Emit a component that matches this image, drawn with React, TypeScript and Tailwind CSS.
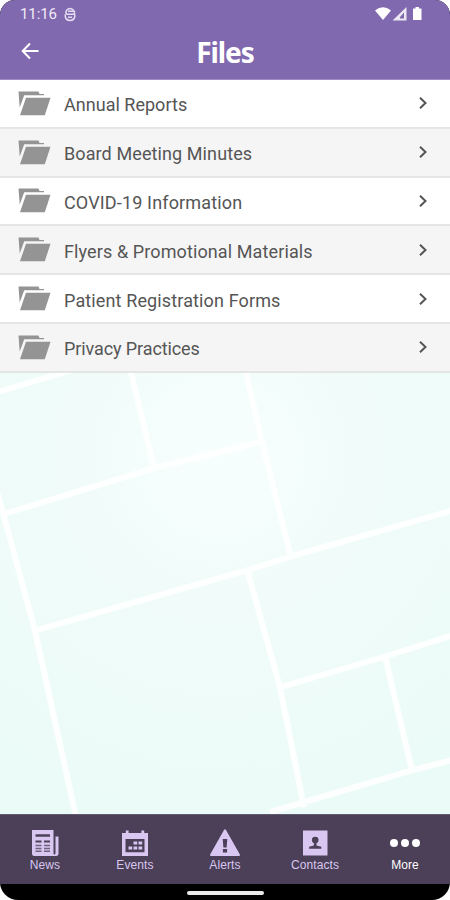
import type { ReactNode } from 'react';

type FolderRow = {
  name: string;
  /** Letter spacing differs slightly per label. */
  tracking: string;
};

const folders: FolderRow[] = [
  { name: 'Annual Reports', tracking: 'tracking-[0.02px]' },
  { name: 'Board Meeting Minutes', tracking: 'tracking-[0.1px]' },
  { name: 'COVID-19 Information', tracking: 'tracking-[0.15px]' },
  { name: 'Flyers & Promotional Materials', tracking: 'tracking-[0.11px]' },
  { name: 'Patient Registration Forms', tracking: 'tracking-[0.13px]' },
  { name: 'Privacy Practices', tracking: 'tracking-[-0.1px]' },
];

function StatusBar() {
  return (
    <div className="flex h-7 items-center justify-between pr-[27px] pl-5 text-white">
      <div className="flex items-center gap-[7px]">
        <span className="text-[15px] leading-none tracking-[-0.1px] text-[#f1eaf9]">11:16</span>
        <svg className="h-[15px] w-[12px]" viewBox="0 0 12 15" fill="none" stroke="#e6dcf3" strokeWidth="1.5">
          <path d="M9.6 3.2Q6-.4 2.6 3.2 1 6 3 7.2H10.8M1.3 7.2V9.5Q2 13.4 6 13.4T10.8 9.5V7.2M4 4.3h6.4V7M4 10.2h4.2" />
        </svg>
      </div>
      <svg className="h-[16px] w-[48px]" viewBox="0 0 48 16" fill="white">
        <path d="M0 4.5Q8-2 16 4.5L8 14Z" />
        <path d="M31.5 1v13.5H17.5Z M29 6.5 25 11v1.5h4Z" fillRule="evenodd" fillOpacity="0.85" />
        <path d="M40.5 1h3.5v1.5h2.5V14h-8.5V2.5h2.5Z" />
      </svg>
    </div>
  );
}

function FolderIcon() {
  return (
    <svg className="h-[25px] w-[34px]" viewBox="0 0 34 25" fill="#949494">
      <path d="M.5.5H20.5L21.5 3h4.5V4.3H6.2L1.7 16.5Z" />
      <path d="M8 6.8H32.5L26.8 24.3H2Z" />
    </svg>
  );
}

function MapBackground() {
  return (
    <svg className="block h-full w-full" viewBox="0 0 450 442" preserveAspectRatio="none">
      <defs>
        <radialGradient id="glow" gradientUnits="userSpaceOnUse" cx="220" cy="85" r="380">
          <stop offset="0" stopColor="#f7fffe" />
          <stop offset="0.35" stopColor="#f1fcfa" />
          <stop offset="1" stopColor="#ebfbf8" />
        </radialGradient>
      </defs>
      <rect width="450" height="442" fill="url(#glow)" />
      <g stroke="#fff" strokeWidth="6" strokeOpacity="0.9" fill="none">
        <path d="M-5 20 75-4M130-5 154 95M245-5 262 69 290 181M5 141 155 95 260 69" />
        <path d="M-3 118 35 258 76 445M35 258 249 197 290 184 455 137" />
        <path d="M248 200 280 315 304 435M280 315 385 284 455 262M385 284 412 398M270 440 412 398 455 387" />
      </g>
    </svg>
  );
}

const navItems: { label: string; icon: ReactNode }[] = [
  {
    label: 'News',
    icon: (
      <svg className="h-[28px] w-[30px]" viewBox="0 0 30 28">
        <path fill="currentColor" d="M2 1h21.5v23q0 1.5 1 1.5t1-1.5V7.5h3V25q0 2-2.5 2H4.5Q2 27 2 24.5Z" />
        <path stroke="#4b4057" strokeWidth="2.6" d="M5.5 6.5h14.5" />
        <path stroke="#4b4057" strokeWidth="2" d="M5.5 12.5h6M14 12.5h6" />
        <path stroke="#4b4057" strokeWidth="1.6" strokeOpacity="0.75" d="M5.5 16.5h6M14 16.5h6M5.5 19.5h6M14 19.5h6M5.5 22.3h6M14 22.3h6" />
      </svg>
    ),
  },
  {
    label: 'Events',
    icon: (
      <svg className="h-[28px] w-[30px]" viewBox="0 0 30 28">
        <path fill="currentColor" fillRule="evenodd" d="M2 4h3.8V1.5h2.8V4h12.8V1.5h2.8V4H28V27H2ZM5.5 10v13.3h19V10Z" />
        <path fill="currentColor" d="M13.5 12.5h3.7v3h-3.7ZM18.5 12.5h3.7v3h-3.7ZM8.5 17.5h3.7v3H8.5ZM13.5 17.5h3.7v3h-3.7ZM18.5 17.5h3.7v3h-3.7Z" />
      </svg>
    ),
  },
  {
    label: 'Alerts',
    icon: (
      <svg className="h-[28px] w-[32px]" viewBox="0 0 32 28">
        <path fill="currentColor" stroke="currentColor" strokeWidth="2" strokeLinejoin="round" d="M16 1.3 30 26H2Z" />
        <path fill="#4b4057" d="M13.7 10h4.6l-.7 8.5h-3.2ZM13.9 20h4.2v3.6h-4.2Z" />
      </svg>
    ),
  },
  {
    label: 'Contacts',
    icon: (
      <svg className="h-[28px] w-[30px]" viewBox="0 0 30 28">
        <path fill="currentColor" d="M3 1.5h24.5V26.5H3Z" />
        <circle cx="15.2" cy="11" r="3.3" fill="#4b4057" />
        <path fill="#4b4057" d="M13.9 13h2.6v3.5l4.8 1.2v2H9.1v-2l4.8-1.2Z" />
      </svg>
    ),
  },
  {
    label: 'More',
    icon: (
      <svg className="h-[28px] w-[30px]" viewBox="0 0 30 28" fill="currentColor">
        <circle cx="4" cy="14" r="4" />
        <circle cx="15" cy="14" r="4" />
        <circle cx="26" cy="14" r="4" />
      </svg>
    ),
  },
];

export default function App() {
  return (
    <div className="h-[900px] w-[450px] bg-white font-[Roboto,sans-serif]">
      <div className="flex h-full flex-col overflow-hidden rounded-t-[15px] rounded-b-[18px] bg-black">
        <header className="h-[80px] shrink-0 border-b border-[#9f8dc4] bg-[#8069ae]">
          <StatusBar />
          <div className="grid h-[46px] grid-cols-[60px_1fr_60px] items-center">
            <button type="button" aria-label="Back" className="pl-[21px] text-white">
              <svg className="h-[18px] w-[18px]" viewBox="0 0 18 18" fill="none" stroke="currentColor" strokeWidth="2">
                <path d="M9 1.5 1.7 9 9 16.5M1.7 9H17.5" />
              </svg>
            </button>
            <h1 className="pt-[2px] text-center font-['Noto_Sans'] text-[28px] leading-none font-bold tracking-[-1.1px] text-white">
              Files
            </h1>
          </div>
        </header>

        <ul className="shrink-0">
          {folders.map((folder) => (
            <li
              key={folder.name}
              className="flex h-[48.8px] items-center border-b-2 border-[#e4e6e6] bg-white pr-[22px] pl-[18px] even:bg-[#f5f5f5]"
            >
              <FolderIcon />
              <span className={`ml-3 flex-1 pt-[4px] text-[18px] leading-none whitespace-nowrap text-[#555] ${folder.tracking}`}>
                {folder.name}
              </span>
              <svg className="h-3 w-[10px]" viewBox="0 0 10 12" fill="none" stroke="#555" strokeWidth="2">
                <path d="m2 .8 5.5 5.2L2 11.2" />
              </svg>
            </li>
          ))}
        </ul>

        <main className="min-h-0 flex-1 overflow-hidden">
          <MapBackground />
        </main>

        <nav className="grid h-[70px] shrink-0 grid-cols-5 border-t border-[#625a6d] bg-[#4b4057]">
          {navItems.map(({ label, icon }) => (
            <button
              key={label}
              type="button"
              className="flex flex-col items-center pt-[14px] text-[#d9c6f1] last:text-white"
            >
              {icon}
              <span className="mt-px font-['Liberation_Sans'] text-[12px] leading-[14px] tracking-[0.1px]">{label}</span>
            </button>
          ))}
        </nav>
        <div className="flex h-4 shrink-0 justify-center pt-[7px]">
          <div className="h-1 w-[77px] rounded-full bg-[#e9e9e9]" />
        </div>
      </div>
    </div>
  );
}
